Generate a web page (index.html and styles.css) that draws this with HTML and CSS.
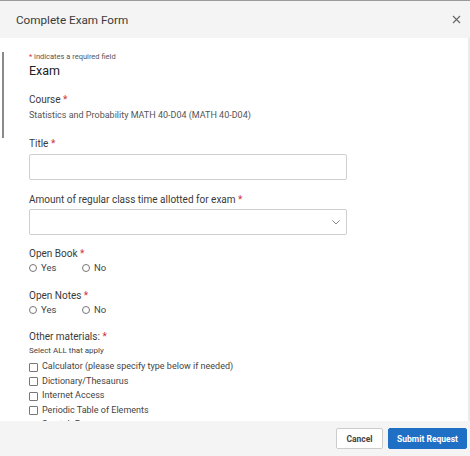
FILE: index.html
```html
<!DOCTYPE html>
<html>
<head>
<meta charset="utf-8">
<link rel="stylesheet" href="styles.css">
</head>
<body>
<div class="modal">
  <div class="modal-header">
    <h1 class="modal-title">Complete Exam Form</h1>
    <span class="close">
      <svg width="9" height="9" viewBox="0 0 9 9"><path d="M1 1L8 8M8 1L1 8" stroke="#666" stroke-width="1.1" fill="none"/></svg>
    </span>
  </div>
  <div class="modal-body">
    <div class="page-bar"></div>
    <p class="req-note"><span class="req">*</span> indicates a required field</p>
    <h2 class="section">Exam</h2>

    <div class="field f-course">
      <div class="label">Course <span class="req">*</span></div>
      <div class="value">Statistics and Probability MATH 40-D04 (MATH 40-D04)</div>
    </div>

    <div class="field f-title">
      <div class="label">Title <span class="req">*</span></div>
      <div class="input"></div>
    </div>

    <div class="field f-amount">
      <div class="label">Amount of regular class time allotted for exam <span class="req">*</span></div>
      <div class="input select">
        <svg width="8" height="5" viewBox="0 0 8 5"><path d="M0.5 0.5L4 4L7.5 0.5" stroke="#888" stroke-width="1" fill="none"/></svg>
      </div>
    </div>

    <div class="field f-book">
      <div class="label">Open Book <span class="req">*</span></div>
      <div class="radios">
        <span class="radio"><span class="circle"></span>Yes</span>
        <span class="radio"><span class="circle"></span>No</span>
      </div>
    </div>

    <div class="field f-notes">
      <div class="label">Open Notes <span class="req">*</span></div>
      <div class="radios">
        <span class="radio"><span class="circle"></span>Yes</span>
        <span class="radio"><span class="circle"></span>No</span>
      </div>
    </div>

    <div class="field f-other">
      <div class="label">Other materials: <span class="req">*</span></div>
      <div class="hint">Select ALL that apply</div>
      <div class="checks">
        <div class="check"><span class="box"></span>Calculator (please specify type below if needed)</div>
        <div class="check"><span class="box"></span>Dictionary/Thesaurus</div>
        <div class="check"><span class="box"></span>Internet Access</div>
        <div class="check"><span class="box"></span>Periodic Table of Elements</div>
        <div class="check"><span class="box"></span>Scratch Paper</div>
      </div>
    </div>
  </div>
  <div class="modal-footer">
    <button class="btn btn-cancel">Cancel</button>
    <button class="btn btn-primary">Submit Request</button>
  </div>
</div>
</body>
</html>
```
FILE: styles.css
```css
* { box-sizing: border-box; }
html, body { margin: 0; padding: 0; }
body {
  width: 470px;
  height: 456px;
  overflow: hidden;
  font-family: Roboto, "Liberation Sans", Arial, sans-serif;
  color: #333;
  background: #fff;
}
.modal {
  width: 470px;
  height: 456px;
  display: flex;
  flex-direction: column;
  border-top: 1px solid #9a9a9a;
}
.modal-header {
  height: 37px;
  flex: none;
  background: #f4f4f4;
  display: flex;
  align-items: center;
  justify-content: space-between;
  padding: 0 9px 0 16px;
}
.modal-title {
  margin: 0;
  font-size: 11.7px;
  font-weight: 400;
  color: #3a3a3a;
}
.close { display: flex; }
.modal-body {
  flex: 1;
  overflow: hidden;
  position: relative;
  padding: 14px 0 0 29px;
  border-right: 2px solid #ececec;
}
.page-bar {
  position: absolute;
  left: 2px;
  top: 14px;
  width: 2px;
  height: 86px;
  background: #8a8a8a;
}
.req { color: #d0343a; }
.req-note {
  margin: 0;
  font-size: 7.5px;
  color: #555;
  line-height: 10px;
}
.section {
  margin: 1px 0 0;
  font-size: 12.5px;
  font-weight: 400;
  color: #222;
  line-height: 16px;
}
.label {
  font-size: 10px;
  line-height: 14px;
  color: #3a3a3a;
}
.value {
  margin-top: 2px;
  font-size: 9px;
  line-height: 13px;
  color: #555;
}
.f-course { margin-top: 14px; }
.f-title { margin-top: 15px; }
.f-amount { margin-top: 13px; }
.f-book { margin-top: 12px; }
.f-notes { margin-top: 15px; }
.f-other { margin-top: 14px; }
.input {
  margin-top: 3px;
  width: 318px;
  height: 26px;
  border: 1px solid #cfcfcf;
  border-radius: 2px;
  background: #fff;
}
.f-amount .input { margin-top: 2px; }
.select {
  display: flex;
  align-items: center;
  justify-content: flex-end;
  padding-right: 6px;
}
.radios {
  display: flex;
  font-size: 9.5px;
  line-height: 13px;
  color: #444;
}
.radio {
  display: flex;
  align-items: center;
  width: 53px;
}
.circle {
  width: 8px;
  height: 8px;
  border: 1px solid #777;
  border-radius: 50%;
  margin-right: 4px;
}
.hint {
  margin-top: 1px;
  font-size: 8px;
  line-height: 12px;
  color: #444;
}
.checks { margin-top: 2px; }
.check {
  display: flex;
  align-items: center;
  font-size: 9px;
  line-height: 14.5px;
  color: #444;
}
.box {
  width: 9px;
  height: 9px;
  border: 1px solid #777;
  border-radius: 1px;
  margin-right: 4px;
  margin-top: 2px;
}
.modal-footer {
  height: 35px;
  flex: none;
  background: #f4f4f4;
  display: flex;
  justify-content: flex-end;
  align-items: center;
  padding-right: 3px;
  gap: 5px;
}
.btn {
  height: 21px;
  font-family: Roboto, "Liberation Sans", Arial, sans-serif;
  font-size: 8.5px;
  font-weight: 700;
  border-radius: 2px;
  padding: 0;
  cursor: pointer;
}
.btn-cancel {
  width: 47px;
  background: #fff;
  color: #444;
  border: 1px solid #ccc;
}
.btn-primary {
  width: 79px;
  background: #1f6fc5;
  color: #fff;
  border: 1px solid #1f6fc5;
}
```
